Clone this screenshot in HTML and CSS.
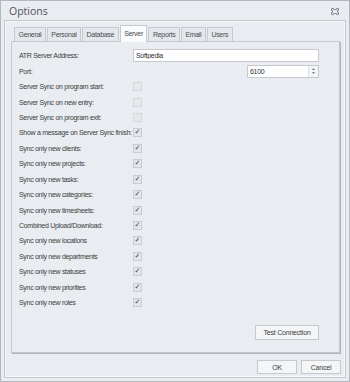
FILE: index.html
```html
<!DOCTYPE html>
<html lang="en">
<head>
  <meta charset="UTF-8">
  <title>Options</title>
  <link rel="stylesheet" href="styles.css">
</head>
<body>
  <div class="window">
    <div class="titlebar">
      <span class="title">Options</span>
      <svg class="close" width="8" height="7" viewBox="0 0 8 7">
        <path d="M0.5 0.5h2v1h3v-1h2v2h-1v2h1v2h-2v-1h-3v1h-2v-2h1v-2h-1z" fill="none" stroke="#8a8e94" stroke-width="1"/>
      </svg>
    </div>
    <div class="frame">
      <div class="tabs">
        <div class="tab">General</div>
        <div class="tab">Personal</div>
        <div class="tab">Database</div>
        <div class="tab active">Server</div>
        <div class="tab">Reports</div>
        <div class="tab">Email</div>
        <div class="tab">Users</div>
      </div>
      <div class="page">
        <div class="form">
          <div class="row">
            <label>ATR Server Address:</label>
            <input class="text-input" type="text" value="Softpedia">
          </div>
          <div class="row">
            <label>Port:</label>
            <div class="spin">
              <span class="spin-value">6100</span>
              <span class="spin-btn">
                <svg width="5" height="8" viewBox="0 0 5 8"><path d="M2.5 1l1.5 2h-3zM2.5 7l1.5-2h-3z" fill="#7a7e84"/></svg>
              </span>
            </div>
          </div>
          <div class="row"><label>Server Sync on program start:</label><span class="check disabled"></span></div>
          <div class="row"><label>Server Sync on new entry:</label><span class="check disabled"></span></div>
          <div class="row"><label>Server Sync on program exit:</label><span class="check disabled"></span></div>
          <div class="row"><label>Show a message on Server Sync finish:</label><span class="check on"></span></div>
          <div class="row"><label>Sync only new clients:</label><span class="check on"></span></div>
          <div class="row"><label>Sync only new projects:</label><span class="check on"></span></div>
          <div class="row"><label>Sync only new tasks:</label><span class="check on"></span></div>
          <div class="row"><label>Sync only new categories:</label><span class="check on"></span></div>
          <div class="row"><label>Sync only new timesheets:</label><span class="check on"></span></div>
          <div class="row"><label>Combined Upload/Download:</label><span class="check on"></span></div>
          <div class="row"><label>Sync only new locations</label><span class="check on"></span></div>
          <div class="row"><label>Sync only new departments</label><span class="check on"></span></div>
          <div class="row"><label>Sync only new statuses</label><span class="check on"></span></div>
          <div class="row"><label>Sync only new priorities</label><span class="check on"></span></div>
          <div class="row"><label>Sync only new roles</label><span class="check on"></span></div>
        </div>
        <div class="page-actions">
          <button class="btn test-btn">Test Connection</button>
        </div>
      </div>
      <div class="footer">
        <button class="btn small-btn">OK</button>
        <button class="btn small-btn">Cancel</button>
      </div>
    </div>
  </div>
</body>
</html>
```

FILE: styles.css
```css
body {
  margin: 0;
  font-family: "Liberation Sans", Arial, sans-serif;
  font-size: 7px;
  letter-spacing: -0.3px;
  color: #3a3d42;
  background: #e9ecf0;
}

.window {
  width: 350px;
  height: 382px;
  box-sizing: border-box;
  border: 1px solid #b4b8bd;
  background: #e9ecf0;
  display: flex;
  flex-direction: column;
}

.titlebar {
  height: 19px;
  display: flex;
  align-items: center;
  justify-content: space-between;
  padding: 0 10px 0 8px;
}

.title {
  font-family: "Open Sans", sans-serif;
  font-size: 10.5px;
  letter-spacing: 0;
  color: #50545a;
}

.close {
  margin-top: 1px;
}

.frame {
  flex: 1;
  margin: 0 3px 3px 3px;
  border: 1px solid #c4c8cd;
  box-shadow: inset 0 0 0 1px #f4f6f8;
  display: flex;
  flex-direction: column;
  padding: 5px 3px 3px 6px;
}

.tabs {
  display: flex;
  padding-left: 3px;
  height: 15px;
  align-items: flex-end;
  position: relative;
  z-index: 1;
}

.tab {
  height: 14px;
  box-sizing: border-box;
  padding: 0 3.5px;
  display: flex;
  align-items: center;
  border: 1px solid #c6cacf;
  border-bottom: none;
  margin-right: 1px;
  background: #e4e7eb;
  color: #4a4d52;
}

.tab.active {
  height: 17px;
  margin-bottom: -1px;
  background: #fafbfc;
  padding-bottom: 2px;
}

.page {
  flex: 1;
  border: 1px solid #c4c8cd;
  box-shadow: 1px 1px 0 #b0b4b9;
  background: #e9ecf0;
  display: flex;
  flex-direction: column;
  padding: 6px 20px 12px 7px;
  margin-right: 2px;
}

.form {
  display: flex;
  flex-direction: column;
}

.row {
  height: 15.45px;
  display: flex;
  align-items: center;
}

.row label {
  width: 114px;
  flex-shrink: 0;
  white-space: nowrap;
}

.text-input {
  flex: 1;
  height: 13px;
  box-sizing: border-box;
  border: 1px solid #c6cacf;
  background: #fff;
  font-family: "Liberation Sans", Arial, sans-serif;
  font-size: 7px;
  letter-spacing: -0.3px;
  color: #2c2f33;
  padding: 0 2px;
  margin: 0;
  outline: none;
}

.spin {
  margin-left: auto;
  width: 72px;
  height: 13px;
  box-sizing: border-box;
  border: 1px solid #c6cacf;
  background: #fff;
  display: flex;
  align-items: center;
  justify-content: space-between;
  color: #2c2f33;
}

.spin-value {
  padding-left: 2px;
}

.spin-btn {
  width: 9px;
  height: 11px;
  border-left: 1px solid #dfe2e6;
  background: #f3f4f6;
  display: flex;
  align-items: center;
  justify-content: center;
}

.check {
  width: 9px;
  height: 9px;
  box-sizing: border-box;
  border: 1px solid #c9ccd0;
  background: #e2e5e9;
  display: flex;
  align-items: center;
  justify-content: center;
  font-family: "DejaVu Sans", sans-serif;
  font-size: 7px;
  letter-spacing: 0;
  line-height: 1;
  color: #3a3d42;
}

.check.disabled {
  border-color: #d4d7db;
  background: #e6e9ec;
}

.check.on::after {
  content: "\2713";
  font-weight: bold;
}

.page-actions {
  margin-top: auto;
  display: flex;
  justify-content: flex-end;
}

.btn {
  font-family: "Liberation Sans", Arial, sans-serif;
  font-size: 7px;
  letter-spacing: -0.2px;
  color: #3a3d42;
  background: #f4f5f7;
  border: 1px solid #c6cacf;
  height: 14px;
  padding: 0;
  margin: 0;
}

.test-btn {
  width: 64px;
  height: 15px;
}

.footer {
  display: flex;
  justify-content: flex-end;
  gap: 4px;
  padding-top: 7px;
  padding-right: 1px;
}

.small-btn {
  width: 40px;
}
```
